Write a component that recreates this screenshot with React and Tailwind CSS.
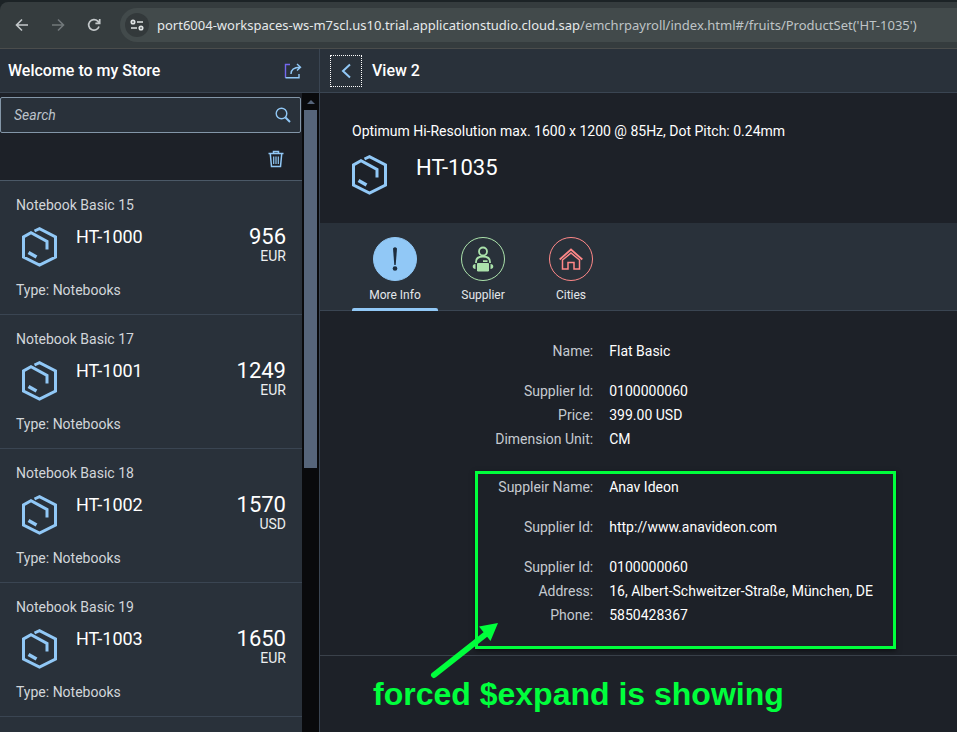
import React from "react";

const products = [
  { name: "Notebook Basic 15", id: "HT-1000", price: "956", currency: "EUR" },
  { name: "Notebook Basic 17", id: "HT-1001", price: "1249", currency: "EUR" },
  { name: "Notebook Basic 18", id: "HT-1002", price: "1570", currency: "USD" },
  { name: "Notebook Basic 19", id: "HT-1003", price: "1650", currency: "EUR" },
];

function ProductIcon() {
  return (
    <svg viewBox="0 0 36 40" className="h-10 w-9 shrink-0" fill="none" stroke="#91c8f6" strokeWidth="3" aria-hidden="true">
      <path d="M12.500 4 L17.500 1.700 L33.500 10 V30 L17.500 38 L1.500 30 V10 L9 5.800 L25 14.500 V22.500" />
      <path d="M6.500 25.500 L14.500 30" strokeWidth="3.500" />
    </svg>
  );
}

function BrowserBar() {
  return (
    <div className="shrink-0 bg-[#1c2326]">
      <div className="h-0.5 w-full" />
      <div className="flex h-[47px] items-center rounded-tl-lg border-b border-[#4b4d4c] bg-[#353c3e] pl-3 text-[#c3c8ca]">
        <button aria-label="Back" className="flex h-6 w-5 items-center justify-center">
          <svg viewBox="0 0 14 14" className="size-3.5" fill="none" stroke="currentColor" strokeWidth="1.600"><path d="M13 7H2M7 1.500 1.500 7 7 12.500" /></svg>
        </button>
        <button aria-label="Forward" className="ml-4 flex h-6 w-5 items-center justify-center text-[#71787a]">
          <svg viewBox="0 0 14 14" className="size-3.5" fill="none" stroke="currentColor" strokeWidth="1.600"><path d="M1 7h11M7 1.500 12.500 7 7 12.500" /></svg>
        </button>
        <button aria-label="Reload" className="ml-4 flex h-6 w-5 items-center justify-center">
          <svg viewBox="0 0 14 14" className="size-3.5" fill="none" stroke="currentColor" strokeWidth="1.700"><path d="M12 8.500A5.300 5.300 0 1 1 10.800 3.200L12.500 5M12.700 1v4.300H8.400" /></svg>
        </button>
        <div className="ml-4 flex h-[34px] min-w-0 flex-1 items-center rounded-l-full bg-[#424a4b] pl-[5px]">
          <button aria-label="Site settings" className="flex size-6 shrink-0 items-center justify-center rounded-full bg-[#33393b] text-[#dfe3e4]">
            <svg viewBox="0 0 14 12" className="h-3 w-3.5" fill="none" stroke="currentColor" strokeWidth="1.700"><circle cx="3" cy="3" r="1.700" /><path d="M7 3h6M1 9h6" /><circle cx="11" cy="9" r="1.700" /></svg>
          </button>
          <p className="ml-2 font-['Noto_Sans',sans-serif] text-[13px] whitespace-nowrap text-[#bfc4c6]">
            <span className="text-[#e6e9ea]">port6004-workspaces-ws-m7scl.us10.trial.applicationstudio.cloud.sap</span>/emchrpayroll/index.html#/fruits/ProductSet('HT-1035')
          </p>
        </div>
      </div>
    </div>
  );
}

function ProductRow({ product }) {
  return (
    <li className="border-b border-[#3a4552] px-4 py-3">
      <p className="leading-[25px] text-[#d2d6da]">{product.name}</p>
      <div className="mt-[7px] flex h-[54px] items-start">
        <div className="flex w-[60px] shrink-0 pt-0.5 pl-1.5"><ProductIcon /></div>
        <h2 className="flex-1 text-lg leading-6 text-white">{product.id}</h2>
        <div className="text-right">
          <p className="text-[22px] leading-[23px] text-white">{product.price}</p>
          <p className="leading-4 text-[#eceef0]">{product.currency}</p>
        </div>
      </div>
      <p className="leading-[23px] text-[#d2d6da]">Type: Notebooks</p>
    </li>
  );
}

function Sidebar() {
  return (
    <aside className="flex w-80 shrink-0 flex-col border-r border-[#3a4552]">
      <header className="flex h-11 shrink-0 items-center justify-between border-b border-[#3a4552] bg-[#29313a] pr-[17px] pl-2">
        <h1 className="text-base font-medium text-white">Welcome to my Store</h1>
        <button aria-label="Share">
          <svg viewBox="0 0 18 16" className="h-4 w-[18px]" fill="none" stroke="#91c8f6" strokeWidth="1.400"><path d="M6 1.500H1.500v13.300" stroke="#7468f0" /><path d="M1.500 14.800H15V11M7 11C7 6.500 10 4.200 16 4.200M13 1l3.500 3.200L13 7.500" /></svg>
        </button>
      </header>
      <div className="flex min-h-0 flex-1">
        <div className="min-w-0 flex-1 overflow-hidden bg-[#29313a]">
          <div className="h-[88px] border-b border-[#4b5967] bg-[#1d2128] pt-1">
            <form role="search" className="mr-px flex h-9 items-center rounded-xs border border-[#8396a8] bg-[#29313a] pr-[9px] pl-[13px]">
              <input type="search" aria-label="Search" placeholder="Search" className="min-w-0 flex-1 bg-transparent text-white italic outline-none placeholder:text-[#bcc3ca]" />
              <button type="button" aria-label="Start search">
                <svg viewBox="0 0 16 16" className="size-4" fill="none" stroke="#91c8f6" strokeWidth="1.400"><circle cx="6.500" cy="6.500" r="5.300" /><path d="m10.500 10.500 4.500 4.500" strokeWidth="2" /></svg>
              </button>
            </form>
            <div className="flex h-[51px] items-center justify-end pr-[18px]">
              <button aria-label="Delete">
                <svg viewBox="0 0 16 18" className="h-[18px] w-4" fill="none" stroke="#91c8f6" strokeWidth="1.500"><path d="M.5 3.500h15M5.500 3V1.500h5V3M2.300 4l1.200 12.500h9L13.700 4" /><path d="M5.700 6.500v7.500M8 6.500v7.500M10.300 6.500v7.500" strokeWidth="1.200" /></svg>
              </button>
            </div>
          </div>
          <ul>
            {products.map((p) => <ProductRow key={p.id} product={p} />)}
          </ul>
        </div>
        <div aria-hidden="true" className="flex w-[17px] shrink-0 flex-col items-center bg-[#090a0c]">
          <div className="flex h-[17px] items-center"><svg viewBox="0 0 8 4" className="h-1 w-2" fill="#56657a"><path d="M0 4 4 0l4 4z" /></svg></div>
          <div className="h-[358px] w-[13px] bg-[#56657a]" />
        </div>
      </div>
    </aside>
  );
}

function Tab({ label, selected, circle, children }) {
  return (
    <button role="tab" aria-selected={selected} className="flex h-[88px] w-[86px] flex-col items-center pt-3.5 text-xs text-[#e4e7ea]">
      <span className={`flex size-11 shrink-0 items-center justify-center rounded-full border ${circle}`}>{children}</span>
      <span className="mt-1 leading-5">{label}</span>
      <span className={`mt-[3px] h-[3px] w-full rounded-t-xs ${selected ? "bg-[#91c8f6]" : ""}`} />
    </button>
  );
}

function Tabs() {
  return (
    <div role="tablist" className="flex h-[88px] gap-0.5 border-b border-[#3a4552] bg-[#29313a] pl-8">
      <Tab label="More Info" selected circle="border-[#91c8f6] bg-[#91c8f6]">
        <svg viewBox="0 0 6 24" className="h-6 w-1.5" fill="#1d2d3e"><path d="M1 1.500Q3-1 5 1.500L3.700 18H2.300z" /><circle cx="3" cy="21.500" r="2.300" /></svg>
      </Tab>
      <Tab label="Supplier" selected={false} circle="border-[#abe2ab]">
        <svg viewBox="0 0 22 26" className="h-[26px] w-[22px]" fill="none" stroke="#abe2ab" strokeWidth="1.800"><circle cx="11" cy="5.500" r="4" /><path d="M4 17v-1c0-4 2-5.500 7-5.500s7 1.500 7 5.500v1M11 15.200h4.500" /><path d="M5.500 17.500h11v7.500h-11z" fill="#abe2ab" strokeWidth="1" /><path d="M3.500 18v5C-.2 23-.2 18 3.500 18zM18.500 18v5c3.700 0 3.700-5 0-5z" fill="#abe2ab" stroke="none" /></svg>
      </Tab>
      <Tab label="Cities" selected={false} circle="border-[#ff8888]">
        <svg viewBox="0 0 24 22" className="h-[22px] w-6" fill="none" stroke="#ff8888" strokeWidth="1.500"><path d="M.7 11.500 12 1.500l11.300 10" strokeWidth="1.800" /><path d="M3.500 12v9H9v-6.500h6V21h5.500v-9L12 5z" /></svg>
      </Tab>
    </div>
  );
}

const groups = [
  [["Name:", "Flat Basic"]],
  [["Supplier Id:", "0100000060"], ["Price:", "399.00 USD"], ["Dimension Unit:", "CM"]],
];

const supplierGroups = [
  [["Suppleir Name:", "Anav Ideon"]],
  [["Supplier Id:", "http://www.anavideon.com"]],
  [["Supplier Id:", "0100000060"], ["Address:", "16, Albert-Schweitzer-Straße, München, DE"], ["Phone:", "5850428367"]],
];

function FieldGroups({ items }) {
  return (
    <div className="flex flex-col gap-4">
      {items.map((rows, i) => (
        <dl key={i}>
          {rows.map(([label, value]) => (
            <div key={label} className="grid grid-cols-[11fr_14fr] gap-4 leading-6">
              <dt className="text-right text-[#c5cad0]">{label}</dt>
              <dd className="text-white">{value}</dd>
            </div>
          ))}
        </dl>
      ))}
    </div>
  );
}

function Detail() {
  return (
    <main className="min-w-0 flex-1 overflow-hidden">
      <header className="flex h-11 items-center gap-2.5 border-b border-[#3a4552] bg-[#29313a] pl-2.5">
        <button aria-label="Navigate back" className="flex size-8 items-center justify-center border border-dotted border-white">
          <svg viewBox="0 0 10 16" className="h-4 w-2.5" fill="none" stroke="#91c8f6" strokeWidth="2"><path d="M9 1.500 2 8l7 6.500" /></svg>
        </button>
        <h2 className="text-base font-medium text-white">View 2</h2>
      </header>
      <section className="h-[130px] px-8 pt-[26px]">
        <p className="leading-6 text-white">Optimum Hi-Resolution max. 1600 x 1200 @ 85Hz, Dot Pitch: 0.24mm</p>
        <div className="mt-3 flex items-start gap-7">
          <ProductIcon />
          <h3 className="text-[22px] leading-[26px] text-white">HT-1035</h3>
        </div>
      </section>
      <Tabs />
      <section className="relative">
        <div className="flex flex-col gap-6 border-b border-[#3a414a] pt-7 pb-7">
          <FieldGroups items={groups} />
          <FieldGroups items={supplierGroups} />
        </div>
        <div className="absolute top-40 left-[155px] h-[178px] w-[421px] border-[3px] border-[#00ff3c] shadow-[0_2px_5px_rgba(0,0,0,0.5)]" />
        <svg viewBox="0 0 70 60" className="absolute top-[310px] left-[110px] h-[60px] w-[70px]" fill="#00ff3c" stroke="#00ff3c" aria-hidden="true">
          <path d="M4 54 56 13" strokeWidth="6" strokeLinecap="round" />
          <path d="M68 2 49 5.500 60.500 20z" stroke="none" />
        </svg>
        <p className="absolute top-[363px] left-[53px] font-['Liberation_Sans',Arial,sans-serif] text-[32px] leading-10 font-bold whitespace-nowrap text-[#00ff3c]">forced $expand is showing</p>
      </section>
    </main>
  );
}

export default function App() {
  return (
    <div className="flex h-screen flex-col overflow-hidden bg-[#1d2128] font-[Roboto,sans-serif] text-sm">
      <BrowserBar />
      <div className="flex min-h-0 flex-1">
        <Sidebar />
        <Detail />
      </div>
    </div>
  );
}
